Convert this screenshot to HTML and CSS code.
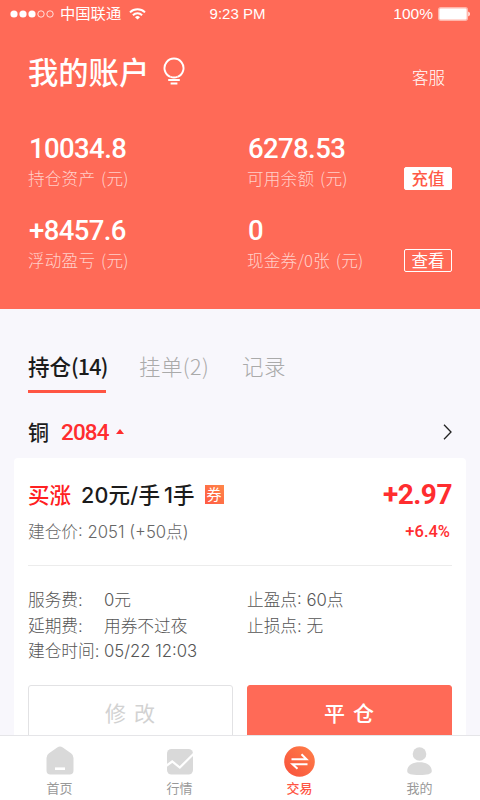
FILE: index.html
```html
<!DOCTYPE html>
<html lang="zh-CN">
<head>
  <meta charset="utf-8">
  <title>我的账户</title>
  <link rel="stylesheet" href="styles.css">
</head>
<body>
  <header class="header">
    <div class="status-bar">
      <div class="carrier">
        <svg width="44" height="8" viewBox="0 0 44 8">
          <g fill="#fff"><circle cx="4" cy="4" r="3.6"/><circle cx="13" cy="4" r="3.6"/><circle cx="22" cy="4" r="3.6"/></g>
          <g fill="none" stroke="#fff" stroke-width=".8"><circle cx="31" cy="4" r="3.2"/><circle cx="40" cy="4" r="3.2"/></g>
        </svg>
        <span class="carrier-name">中国联通</span>
        <svg width="17" height="12" viewBox="0 0 17 12" fill="none" stroke="#fff" stroke-width="2">
          <path d="M1 4.4a10.8 10.8 0 0 1 15 0"/>
          <path d="M3.9 7.2a6.6 6.6 0 0 1 9.2 0"/>
          <path d="M8.5 11.6L6 9.2a3.6 3.6 0 0 1 5 0z" fill="#fff" stroke="none"/>
        </svg>
      </div>
      <span class="time">9:23 PM</span>
      <div class="battery">
        <span>100%</span>
        <svg width="32" height="14" viewBox="0 0 32 14">
          <rect x=".7" y=".7" width="28.6" height="12.6" rx="2" fill="#fff" stroke="#ffb5ab" stroke-width="1.4"/>
          <path d="M30.3 4.5q1.6.8 1.6 2.5t-1.6 2.5z" fill="#fff"/>
        </svg>
      </div>
    </div>

    <div class="title-row">
      <h1>我的账户</h1>
      <svg width="22" height="28" viewBox="0 0 22 28" fill="none" stroke="#fff" stroke-width="1.9">
        <path d="M7.5 19.9a9.5 9.5 0 1 1 7 0"/>
        <path d="M7.5 19.9q3.5 1.2 7 0M5.2 23h11.6M7.6 26.5h6.8"/>
      </svg>
      <a class="service">客服</a>
    </div>

    <div class="assets">
      <div class="asset">
        <div class="amount">10034.8</div>
        <div class="label">持仓资产 (元)</div>
      </div>
      <div class="asset">
        <div class="amount">6278.53</div>
        <div class="label">可用余额 (元)<button class="btn-small solid">充值</button></div>
      </div>
      <div class="asset">
        <div class="amount">+8457.6</div>
        <div class="label">浮动盈亏 (元)</div>
      </div>
      <div class="asset">
        <div class="amount">0</div>
        <div class="label">现金券/0张 (元)<button class="btn-small">查看</button></div>
      </div>
    </div>
  </header>

  <main class="content">
    <nav class="tabs">
      <a class="tab active">持仓<span class="num">(14)</span></a>
      <a class="tab">挂单(2)</a>
      <a class="tab">记录</a>
    </nav>

    <div class="product">
      <span class="product-name">铜</span>
      <span class="product-price">2084</span>
      <svg width="8" height="5" viewBox="0 0 8 5"><path d="M4 0l4 5H0z" fill="#ff2d2f"/></svg>
      <svg class="arrow" width="9" height="16" viewBox="0 0 9 16" fill="none" stroke="#222" stroke-width="1.3"><path d="M1 .8L8 8l-7 7.2"/></svg>
    </div>

    <section class="card">
      <div class="order">
        <span class="direction">买涨</span>
        <span class="lots">20元/手</span>
        <span class="count">1手</span>
        <span class="coupon">券</span>
        <span class="profit">+2.97</span>
      </div>
      <div class="order-sub">
        <span>建仓价: 2051 (+50点)</span>
        <span class="percent">+6.4%</span>
      </div>
      <div class="details">
        <div>
          <p><span class="key">服务费:</span>0元</p>
          <p><span class="key">延期费:</span>用券不过夜</p>
          <p><span class="key">建仓时间:</span>05/22 12:03</p>
        </div>
        <div>
          <p>止盈点: 60点</p>
          <p>止损点: 无</p>
        </div>
      </div>
      <div class="actions">
        <button class="btn">修改</button>
        <button class="btn primary">平仓</button>
      </div>
    </section>
  </main>

  <footer class="tabbar">
    <a class="tabbar-item">
      <svg width="32" height="32" viewBox="0 0 32 32">
        <path d="M5 8.3L13.2 2.4Q16 .7 18.8 2.4L27 8.3Q29.5 10 29.5 13V25.5Q29.5 29.5 25.5 29.5H6.5Q2.5 29.5 2.5 25.5V13Q2.5 10 5 8.3z" fill="#d9d9d9"/>
        <path d="M11 23.7h10" stroke="#fff" stroke-width="2.6"/>
      </svg>
      <span>首页</span>
    </a>
    <a class="tabbar-item">
      <svg width="32" height="32" viewBox="0 0 32 32">
        <rect x="3" y="4" width="26" height="25.5" rx="4.5" fill="#d9d9d9"/>
        <path d="M2 21l6.2-4.5 7.6 6L30 8.5" fill="none" stroke="#fff" stroke-width="2.2"/>
      </svg>
      <span>行情</span>
    </a>
    <a class="tabbar-item active">
      <svg width="32" height="32" viewBox="0 0 32 32">
        <defs>
          <linearGradient id="hot" x1="0" y1="1" x2="1" y2="0">
            <stop offset="0" stop-color="#f8503c"/>
            <stop offset="1" stop-color="#ff7f48"/>
          </linearGradient>
        </defs>
        <circle cx="15.5" cy="16.5" r="15.3" fill="url(#hot)"/>
        <path d="M7.5 14.2h15l-5-5M23.5 19.2h-15l5 4.6" fill="none" stroke="#fff" stroke-width="2"/>
      </svg>
      <span>交易</span>
    </a>
    <a class="tabbar-item">
      <svg width="32" height="32" viewBox="0 0 32 32" fill="#d9d9d9">
        <circle cx="15.5" cy="9" r="6.8"/>
        <path d="M3.2 26C3.2 20 8.5 17.2 15.5 17.2s12.3 2.8 12.3 8.8c0 3-4.3 4-12.3 4s-12.3-1-12.3-4z"/>
      </svg>
      <span>我的</span>
    </a>
  </footer>
</body>
</html>
```

FILE: styles.css
```css
* {
  box-sizing: border-box;
  margin: 0;
  padding: 0;
}

body {
  width: 480px;
  height: 800px;
  display: flex;
  flex-direction: column;
  overflow: hidden;
  background: #f8f7fc;
  color: #1b1b1b;
  font-family: "Noto Sans CJK SC", sans-serif;
}

svg {
  display: block;
  flex: none;
}

button {
  font-family: inherit;
}

.header {
  height: 309px;
  flex: none;
  background: #ff6a57;
  color: #fff;
}

/* status bar */
.status-bar {
  height: 28px;
  padding: 0 10px;
  display: grid;
  grid-template-columns: 1fr auto 1fr;
  align-items: center;
  font-family: "Liberation Sans", "Noto Sans CJK SC", sans-serif;
  font-size: 15px;
}

.carrier,
.battery {
  display: flex;
  align-items: center;
}

.carrier-name {
  margin: 0 8px 0 6px;
  font-size: 15.3px;
  line-height: 20px;
}

.time {
  margin: 0 5px 2px 0;
}

.battery {
  justify-content: flex-end;
  gap: 5px;
  font-size: 15.5px;
}

/* title */
.title-row {
  height: 85px;
  padding: 0 35px 0 28px;
  display: flex;
  align-items: center;
}

.title-row h1 {
  margin-right: 14px;
  font-size: 30.3px;
  font-weight: 500;
  line-height: 44px;
}

.service {
  margin: 13px 0 0 auto;
  font-size: 16.5px;
  font-weight: 300;
}

/* account numbers */
.assets {
  padding: 19px 28px 0;
  display: grid;
  grid-template-columns: 219px 1fr;
  grid-auto-rows: 82px;
}

.amount {
  padding-left: 1px;
  font-family: Roboto, sans-serif;
  font-size: 27.5px;
  font-weight: 500;
  letter-spacing: -0.6px;
  line-height: 33px;
}

.label {
  height: 25px;
  display: flex;
  align-items: center;
  justify-content: space-between;
  font-size: 16.6px;
  font-weight: 300;
  letter-spacing: 0.2px;
  word-spacing: 2px;
  color: rgba(255, 255, 255, 0.7);
}

.btn-small {
  width: 48px;
  height: 23px;
  margin-top: 1px;
  border: 1px solid #fff;
  border-radius: 2px;
  background: none;
  color: #fff;
  font-size: 16.5px;
  line-height: 19px;
}

.btn-small.solid {
  background: #fff;
  color: #ff5a47;
  font-weight: 500;
}

.content {
  flex: 1;
  min-height: 0;
  overflow: hidden;
}

/* order tabs */
.tabs {
  height: 84px;
  padding: 37px 28px 0;
  display: flex;
  gap: 33px;
}

.tab {
  height: 47px;
  font-size: 21.5px;
  font-weight: 300;
  letter-spacing: 0.4px;
  line-height: 40px;
  color: #aaa;
}

.tab.active {
  width: 78px;
  border-bottom: 3px solid #ff5543;
  color: #1b1b1b;
  font-weight: 500;
  letter-spacing: 0;
  white-space: nowrap;
}

.num {
  letter-spacing: -0.8px;
}

.product {
  height: 65px;
  padding: 12px 28px 0;
  display: flex;
  align-items: center;
}

.product-name {
  margin-top: -2px;
  font-size: 21px;
  font-weight: 500;
  line-height: 30px;
}

.product-price {
  margin: 0 7px 0 12px;
  font-family: Roboto, sans-serif;
  font-size: 22.5px;
  font-weight: 500;
  letter-spacing: -0.9px;
  color: #ff2d2f;
}

.arrow {
  margin-left: auto;
}

/* position card */
.card {
  height: 320px;
  margin: 0 14px;
  padding: 18px 14px 0;
  border-radius: 4px;
  background: #fff;
}

.order {
  height: 37px;
  display: flex;
  align-items: center;
  font-family: Inter, "Noto Sans CJK SC", sans-serif;
  font-size: 21.5px;
  font-weight: 500;
  line-height: 30px;
}

.direction {
  margin-right: 10px;
  color: #ff2021;
}

.lots {
  margin-right: 4px;
  letter-spacing: 0.2px;
}

.coupon {
  width: 19px;
  height: 19px;
  margin-left: 10px;
  background: linear-gradient(45deg, #ff5a44, #ff8748);
  color: #fff;
  font-size: 15px;
  font-weight: 400;
  line-height: 19px;
  text-align: center;
}

.profit {
  margin-left: auto;
  font-family: Roboto, sans-serif;
  font-size: 28px;
  font-weight: 700;
  letter-spacing: -0.5px;
  color: #ff2d2f;
}

.order-sub {
  height: 53px;
  padding-bottom: 16px;
  display: flex;
  align-items: center;
  justify-content: space-between;
  border-bottom: 1px solid #ececec;
  font-family: Inter, "Noto Sans CJK SC", sans-serif;
  font-size: 16.7px;
  font-weight: 300;
  color: #666;
}

.percent {
  margin-right: 2px;
  font-family: Roboto, sans-serif;
  font-size: 16.5px;
  font-weight: 500;
  color: #ff2d2f;
}

.details {
  height: 119px;
  padding-top: 22px;
  display: grid;
  grid-template-columns: 219px 1fr;
  font-family: Inter, "Noto Sans CJK SC", sans-serif;
  font-size: 16.7px;
  font-weight: 300;
  line-height: 25.5px;
  color: #555;
}

.key {
  display: inline-block;
  width: 76px;
}

.actions {
  display: grid;
  grid-template-columns: 1fr 1fr;
  gap: 14px;
}

.btn {
  height: 58px;
  padding: 0 0 4px 7px;
  border: 1px solid #e2e2e4;
  border-radius: 3px;
  background: #fff;
  color: #d2d2d2;
  font-size: 21px;
  font-weight: 400;
  letter-spacing: 8px;
}

.btn.primary {
  border-color: #ff6a57;
  background: #ff6a57;
  color: #fff;
  font-weight: 500;
}

/* bottom navigation */
.tabbar {
  height: 65px;
  flex: none;
  display: grid;
  grid-template-columns: repeat(4, 1fr);
  border-top: 1px solid #e5e5e8;
  background: #fff;
}

.tabbar-item {
  padding-top: 9px;
  display: flex;
  flex-direction: column;
  align-items: center;
  font-size: 13px;
  line-height: 22px;
  color: #999;
}

.tabbar-item span {
  margin-right: 1px;
}

.tabbar-item.active {
  color: #ff5543;
  font-weight: 500;
}
```
